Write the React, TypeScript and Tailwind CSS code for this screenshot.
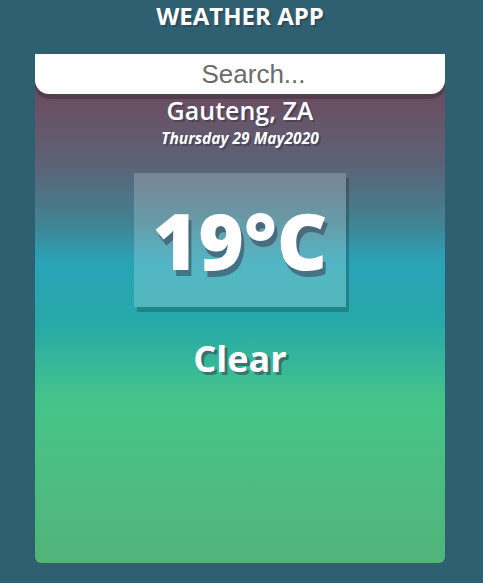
import { useState } from 'react'

const App = () => {
  const [query, setQuery] = useState('')

  return (
    <div className="min-h-screen bg-[#2e6071] font-['Open_Sans',sans-serif] text-white">
      <div className="w-[480px] flex flex-col items-center">
        <h1 className="mt-[1px] text-[24px] leading-[30px] font-bold [text-shadow:2px_2px_rgba(50,50,70,0.5)]">
          WEATHER APP
        </h1>
        <main className="mt-[23px] w-[410px] h-[509px] rounded-b-[6px] flex flex-col items-center bg-[linear-gradient(to_bottom,#56404f_0%,#6a5064_10%,#5b6377_22%,#447f8f_32%,#29a3b7_41%,#27a9a8_53%,#45c489_68%,#4cbe83_80%,#51b47a_100%)]">
          <input
            type="text"
            value={query}
            onChange={(e) => setQuery(e.target.value)}
            placeholder="Search..."
            className="w-full h-[40px] pl-[27px] bg-white rounded-b-[14px] text-center text-[26px] text-[#333] placeholder:text-[#6b6b6b] font-['Liberation_Sans',sans-serif] outline-none shadow-[0_5px_rgba(0,0,0,0.2)]"
          />
          <div className="mt-[3px] text-[25px] leading-[26px] font-semibold [text-shadow:2px_2px_rgba(50,50,70,0.5)]">
            Gauteng, ZA
          </div>
          <div className="mt-[7px] text-[15.5px] leading-[17px] font-bold italic [text-shadow:2px_2px_rgba(50,50,70,0.5)]">
            Thursday 29 May2020
          </div>
          <div className="mt-[26px] w-[212px] h-[134px] flex items-center justify-center bg-white/20 shadow-[3px_5px_rgba(0,0,0,0.2)]">
            <span className="text-[78px] leading-none font-extrabold [text-shadow:3px_6px_rgba(50,50,70,0.5)]">
              19°C
            </span>
          </div>
          <div className="mt-[28px] text-[36px] leading-[48px] font-bold [text-shadow:3px_3px_rgba(50,50,70,0.5)]">
            Clear
          </div>
        </main>
      </div>
    </div>
  )
}

export default App
